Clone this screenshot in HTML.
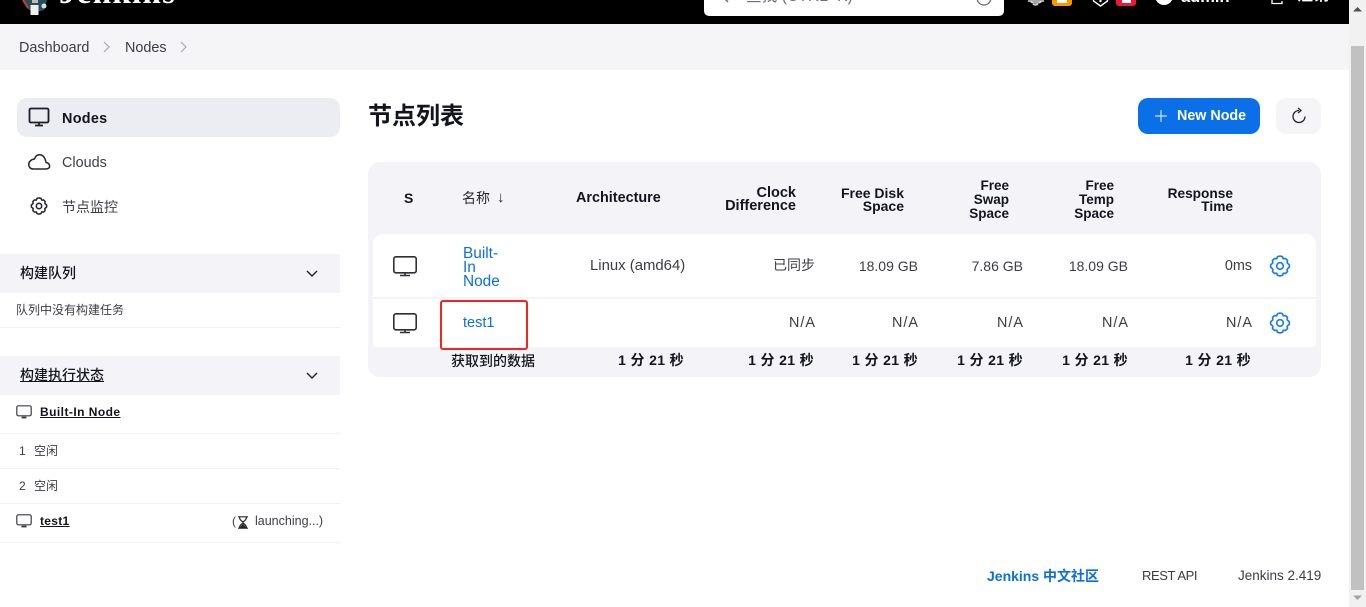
<!DOCTYPE html>
<html><head><meta charset="utf-8"><style>
html,body{margin:0;padding:0;width:1366px;height:607px;overflow:hidden;background:#fff}
body{position:relative;font-family:"Liberation Sans","Noto Sans CJK SC",sans-serif;font-size:14px;color:#3c3c44}
.a{position:absolute;white-space:nowrap}
.r{position:absolute;white-space:nowrap;text-align:right}
.b{font-weight:700;color:#14141f}
.l{color:#0b6fe0}
svg{position:absolute;overflow:visible}
.h{line-height:14px;text-align:right;font-weight:700;color:#14141f;position:absolute;white-space:nowrap}
.ln{position:absolute;left:0;width:340px;height:1px;background:#f1f1f4}
.sec{position:absolute;left:0;width:340px;height:39px;background:#f4f4f8}
.v{line-height:18px;font-size:14px}
.na{line-height:18px;font-size:14.4px;letter-spacing:1px;margin-right:-1px}
.t{line-height:18px;font-size:14px;letter-spacing:.35px}
</style></head><body>
<!-- header -->
<div class="a" style="left:0;top:0;width:1349px;height:24px;background:#000"></div>
<svg style="left:20px;top:0" width="30" height="18" viewBox="0 0 30 18"><path d="M3 0 L8 9 L14 13 L24 10 L27 0Z" fill="#24505e"/><path d="M3 0L8 8" stroke="#d33833" stroke-width="2"/><rect x="10.500" y="5" width="8" height="10" fill="#f0f0f0"/><circle cx="24" cy="6" r="2.500" fill="#ddd"/><path d="M12 0h6v3h-6z" fill="#c9b8b0"/></svg>
<div class="a" style="left:59px;top:-20px;font:700 33px 'Liberation Serif',serif;color:#fff;line-height:26px;letter-spacing:1.300px">Jenkins</div>
<div class="a" style="left:704px;top:-20px;width:300px;height:36px;background:#fff;border-radius:5px"></div>
<div class="a" style="left:746px;top:-12px;font-size:15.700px;line-height:18px;color:#6d6b80">查找 (CTRL+K)</div>
<svg style="left:975px;top:-8px" width="18" height="18"><circle cx="9" cy="6" r="7" fill="none" stroke="#6d6b80" stroke-width="1.300"/></svg>
<svg style="left:722px;top:-4px" width="14" height="10"><path d="M0 0l6 6" stroke="#6d6b80" stroke-width="1.500"/></svg>
<svg style="left:1027px;top:0" width="20" height="8"><path d="M1 1h16M4 1.500c0 2 10 2 10 0M6 4a3 2 0 0 0 5 0" fill="none" stroke="#ddd" stroke-width="1.400"/></svg>
<div class="a" style="left:1052px;top:-10px;width:20px;height:16px;background:#fe9500;border-radius:3px"></div>
<div class="a" style="left:1057px;top:-6px;width:10px;height:9px;background:#fff"></div>
<svg style="left:1092px;top:0" width="18" height="8"><path d="M1.500 0L1.500 1 8.500 6 15.500 1 15.500 0" fill="none" stroke="#fff" stroke-width="1.400"/><circle cx="8.500" cy="1" r="1.200" fill="#fff"/></svg>
<div class="a" style="left:1116px;top:-10px;width:20px;height:16px;background:#f11738;border-radius:3px"></div>
<div class="a" style="left:1122px;top:-6px;width:9px;height:9px;background:#fff"></div>
<div class="a" style="left:1155px;top:-13px;width:18px;height:18px;border-radius:50%;background:#fff"></div>
<div class="a" style="left:1181px;top:-11px;font-weight:700;color:#fff;font-size:16.500px;line-height:16px">admin</div>
<svg style="left:1271px;top:0" width="14" height="5"><path d="M1 0v3.500h10V1" fill="none" stroke="#fff" stroke-width="1.300"/></svg>
<div class="a" style="left:1297px;top:-13px;font-weight:700;color:#fff;font-size:16px;line-height:18px">注销</div>
<!-- breadcrumb -->
<div class="a" style="left:0;top:24px;width:1349px;height:46px;background:#f5f5f8"></div>
<div class="a" style="left:19px;top:39px;line-height:18px;font-size:14.400px">Dashboard</div>
<svg style="left:103px;top:41px" width="8" height="12"><path d="M1 1l5 5-5 5" fill="none" stroke="#a7a6b5" stroke-width="1.200"/></svg>
<div class="a" style="left:125px;top:39px;line-height:18px;font-size:14.400px">Nodes</div>
<svg style="left:180px;top:41px" width="8" height="12"><path d="M1 1l5 5-5 5" fill="none" stroke="#a7a6b5" stroke-width="1.200"/></svg>
<!-- side -->
<div class="a" style="left:17px;top:98px;width:323px;height:39px;background:#ecedf3;border-radius:10px"></div>
<svg style="left:28px;top:107px" width="22" height="20" viewBox="0 0 22 20" fill="none" stroke="#1c1c24" stroke-width="1.800"><rect x="1.500" y="1.500" width="19" height="14" rx="1.500"/><path d="M7 18.500h8M11 16v2"/></svg>
<div class="a b" style="left:62px;top:110px;line-height:18px;font-size:14.400px;letter-spacing:.3px">Nodes</div>
<svg style="left:28px;top:154px" width="22" height="16" viewBox="0 0 22 16" fill="none" stroke="#26262e" stroke-width="1.500" stroke-linejoin="round"><path d="M5 15h12.500c3.500 0 4.500-1.800 4-3.600-.4-1.600-1.700-2.700-3.500-2.900C17 3.300 14.500 .8 11.500 .8 9 .8 7.300 2.500 6.500 5 3 5.300 .7 8 .7 10.500.7 13 2.500 15 5 15z"/></svg>
<div class="a" style="left:62px;top:154px;line-height:18px;font-size:14.400px">Clouds</div>
<svg style="left:30px;top:197px" width="18" height="18" viewBox="0 0 20 20" fill="none" stroke="#26262e" stroke-width="1.700" stroke-linejoin="round"><path d="M10 1l2.200.5.800 2 2-.3 1.800 1.700-.3 2.200L18.500 9v2l-2 1.900.3 2.200-1.800 1.700-2-.3-.8 2-2.200.5-2.200-.5-.8-2-2 .3-1.800-1.700.3-2.200-2-1.900V9l2-1.900-.3-2.200 1.800-1.700 2 .3.800-2z"/><circle cx="10" cy="10" r="3"/></svg>
<div class="a" style="left:62px;top:198px;line-height:18px;font-size:14px">节点监控</div>

<div class="sec" style="top:254px"></div>
<div class="a b" style="left:20px;top:264px;font-size:14px;line-height:18px;font-weight:500">构建队列</div>
<svg style="left:306px;top:270px" width="12" height="8"><path d="M1 1l5 5 5-5" fill="none" stroke="#222" stroke-width="1.400"/></svg>
<div class="a" style="left:16px;top:301px;font-size:12px;line-height:18px">队列中没有构建任务</div>
<div class="ln" style="top:327px"></div>

<div class="sec" style="top:356px"></div>
<div class="a b" style="left:20px;top:366px;font-size:14px;line-height:18px;text-decoration:underline;font-weight:500">构建执行状态</div>
<svg style="left:306px;top:372px" width="12" height="8"><path d="M1 1l5 5 5-5" fill="none" stroke="#222" stroke-width="1.400"/></svg>
<svg style="left:16px;top:405px" width="16" height="14" fill="none" stroke="#3c3c44" stroke-width="1.200"><rect x=".8" y=".8" width="14.400" height="10" rx="1.500"/><path d="M5.500 12.500h5" stroke-width="1.800"/></svg>
<div class="a b" style="left:40px;top:403px;font-size:12px;line-height:18px;text-decoration:underline;letter-spacing:.45px">Built-In Node</div>
<div class="ln" style="top:433px"></div>
<div class="a" style="left:19px;top:442px;font-size:12px;line-height:18px">1</div>
<div class="a" style="left:34px;top:442px;font-size:12px;line-height:18px">空闲</div>
<div class="ln" style="top:468px"></div>
<div class="a" style="left:19px;top:477px;font-size:12px;line-height:18px">2</div>
<div class="a" style="left:34px;top:477px;font-size:12px;line-height:18px">空闲</div>
<div class="ln" style="top:503px"></div>
<svg style="left:16px;top:514px" width="16" height="14" fill="none" stroke="#3c3c44" stroke-width="1.200"><rect x=".8" y=".8" width="14.400" height="10" rx="1.500"/><path d="M5.500 12.500h5" stroke-width="1.800"/></svg>
<div class="a b" style="left:40px;top:512px;font-size:12px;line-height:18px;text-decoration:underline;letter-spacing:.3px">test1</div>
<div class="a" style="left:232px;top:512px;font-size:12px;line-height:18px">(</div>
<svg style="left:237px;top:516px" width="12" height="13" fill="none" stroke="#26262e" stroke-width="1.200"><path d="M1 .8h10M1 12.200h10M2.500 1c0 4 3.500 4 3.500 5.500S2.500 8 2.500 12M9.500 1C9.500 5 6 5 6 6.500S9.500 8 9.500 12"/><path d="M3.500 11.500L6 8.500l2.500 3z" fill="#26262e"/></svg>
<div class="a" style="left:255px;top:512px;font-size:12.500px;line-height:18px">launching...)</div>
<div class="ln" style="top:542px"></div>

<!-- main -->
<div class="a" style="left:368px;top:101px;font-size:24px;line-height:32px;font-weight:700;color:#14141f">节点列表</div>
<div class="a" style="left:1138px;top:98px;width:122px;height:36px;background:#0b6fe8;border-radius:10px"></div>
<svg style="left:1154px;top:109px" width="14" height="14"><path d="M7 1v12M1 7h12" stroke="#cfe2fb" stroke-width="1.200"/></svg>
<div class="a" style="left:1177px;top:107px;font-weight:700;color:#fff;font-size:14.300px;line-height:18px">New Node</div>
<div class="a" style="left:1276px;top:98px;width:45px;height:36px;background:#f5f5f8;border-radius:10px"></div>
<svg style="left:1291px;top:107px" width="16" height="18" fill="none" stroke="#26262e" stroke-width="1.300"><path d="M8 3.500A6 6 0 1 0 14 9.500"/><path d="M7 1l3 2.500-3 2.500"/></svg>

<!-- table -->
<div class="a" style="left:368px;top:162px;width:953px;height:215px;background:#f3f3f8;border-radius:12px"></div>
<div class="a" style="left:373px;top:234px;width:943px;height:63px;background:#fff;border-radius:10px 10px 0 0"></div>
<div class="a" style="left:373px;top:299px;width:943px;height:48px;background:#fff;border-radius:0 0 4px 4px"></div>

<div class="a b" style="left:404px;top:190px;line-height:16px;font-size:14px">S</div>
<div class="a" style="left:462px;top:189px;line-height:18px;font-size:14px;color:#26262e">名称</div>
<div class="a" style="left:497px;top:189px;line-height:18px;font-size:15px;color:#26262e">↓</div>
<div class="a b" style="left:576px;top:189px;line-height:18px;font-size:14.400px">Architecture</div>
<div class="h" style="right:570px;top:187px;font-size:14.500px;line-height:13px">Clock<br>Difference</div>
<div class="h" style="right:462px;top:187px;font-size:14px;line-height:13px">Free Disk<br>Space</div>
<div class="h" style="right:357px;top:179px;font-size:13.500px">Free<br>Swap<br>Space</div>
<div class="h" style="right:252px;top:179px;font-size:13.500px">Free<br>Temp<br>Space</div>
<div class="h" style="right:133px;top:187px;font-size:13.700px;line-height:13px">Response<br>Time</div>

<svg style="left:393px;top:256px" width="24" height="21" viewBox="0 0 24 21" fill="none" stroke="#2f2f38" stroke-width="1.600"><rect x=".8" y=".8" width="22.400" height="16" rx="2"/><path d="M7 19.500h10M12 17v2"/></svg>
<svg style="left:393px;top:313px" width="24" height="21" viewBox="0 0 24 21" fill="none" stroke="#2f2f38" stroke-width="1.600"><rect x=".8" y=".8" width="22.400" height="16" rx="2"/><path d="M7 19.500h10M12 17v2"/></svg>

<div class="a l" style="left:463px;top:247px;line-height:14px;font-size:15.400px">Built-<br>In<br>Node</div>
<div class="a l" style="left:463px;top:314px;line-height:18px;font-size:14.500px">test1</div>
<div class="a" style="left:590px;top:257px;line-height:18px;font-size:14.900px">Linux (amd64)</div>
<div class="r" style="right:551px;top:256px;line-height:18px;font-size:14px">已同步</div>
<div class="r v" style="right:448px;top:257px">18.09 GB</div>
<div class="r v" style="right:343px;top:257px">7.86 GB</div>
<div class="r v" style="right:238px;top:257px">18.09 GB</div>
<div class="r" style="right:114px;top:257px;line-height:18px;font-size:14.400px">0ms</div>
<div class="r na" style="right:551px;top:314px">N/A</div>
<div class="r na" style="right:448px;top:314px">N/A</div>
<div class="r na" style="right:343px;top:314px">N/A</div>
<div class="r na" style="right:238px;top:314px">N/A</div>
<div class="r na" style="right:114px;top:314px">N/A</div>
<svg style="left:1269px;top:255px" width="22" height="22" viewBox="0 0 20 20" fill="none" stroke="#1b7ce8" stroke-width="1.500" stroke-linejoin="round"><path d="M10 1l2.200.5.800 2 2-.3 1.800 1.700-.3 2.200L18.500 9v2l-2 1.900.3 2.200-1.800 1.700-2-.3-.8 2-2.200.5-2.200-.5-.8-2-2 .3-1.800-1.700.3-2.200-2-1.900V9l2-1.900-.3-2.200 1.800-1.700 2 .3.800-2z"/><circle cx="10" cy="10" r="3"/></svg>
<svg style="left:1269px;top:312px" width="22" height="22" viewBox="0 0 20 20" fill="none" stroke="#1b7ce8" stroke-width="1.500" stroke-linejoin="round"><path d="M10 1l2.200.5.800 2 2-.3 1.800 1.700-.3 2.200L18.500 9v2l-2 1.900.3 2.200-1.800 1.700-2-.3-.8 2-2.200.5-2.200-.5-.8-2-2 .3-1.800-1.700.3-2.200-2-1.900V9l2-1.900-.3-2.200 1.800-1.700 2 .3.800-2z"/><circle cx="10" cy="10" r="3"/></svg>

<div class="a b" style="left:451px;top:352px;line-height:18px;font-size:14px;font-weight:500">获取到的数据</div>
<div class="r b t" style="right:682px;top:351px">1 分 21 秒</div>
<div class="r b t" style="right:552px;top:351px">1 分 21 秒</div>
<div class="r b t" style="right:448px;top:351px">1 分 21 秒</div>
<div class="r b t" style="right:343px;top:351px">1 分 21 秒</div>
<div class="r b t" style="right:238px;top:351px">1 分 21 秒</div>
<div class="r b t" style="right:115px;top:351px">1 分 21 秒</div>

<!-- red box -->
<div class="a" style="left:440px;top:300px;width:84px;height:46px;border:2px solid #f2261c;border-radius:3px"></div>

<!-- footer -->
<div class="a" style="left:987px;top:567px;line-height:18px;font-weight:700;color:#0b6fe0;font-size:14px">Jenkins 中文社区</div>
<div class="a" style="left:1142px;top:567px;line-height:18px;font-size:13px;letter-spacing:-.4px">REST API</div>
<div class="a" style="left:1238px;top:567px;line-height:18px;font-size:13.500px">Jenkins 2.419</div>

<!-- scrollbar -->
<div class="a" style="left:1349px;top:0;width:17px;height:607px;background:#f1f1f1"></div>
<div class="a" style="left:1351px;top:46px;width:13px;height:544px;background:#c1c1c1"></div>
<svg style="left:1353px;top:6px" width="10" height="6"><path d="M0 5.500L4.500 1 9 5.500z" fill="#505050"/></svg>
<svg style="left:1353px;top:595px" width="10" height="6"><path d="M0 .5L4.500 5 9 .5z" fill="#a3a3a3"/></svg>
</body></html>
